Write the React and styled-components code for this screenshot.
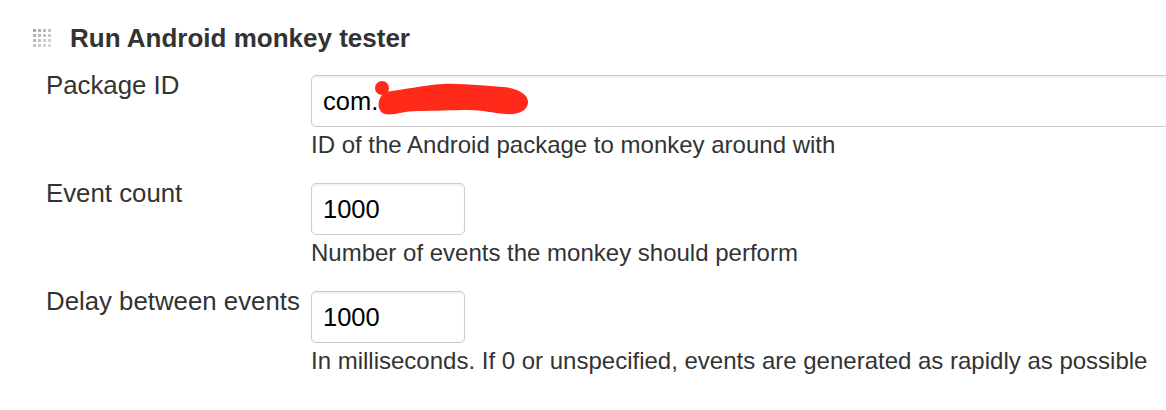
import React from "react";
import styled, { createGlobalStyle } from "styled-components";

const Global = createGlobalStyle`
  html, body { margin: 0; padding: 0; background: #fff; }
  body { overflow: hidden; font-family: "Liberation Sans", Arial, Helvetica, sans-serif; color: #333; }
`;

const Page = styled.div`
  width: 1166px;
  height: 410px;
  overflow: hidden;
  padding-top: 23px;
  box-sizing: border-box;
`;

const Header = styled.div`
  display: flex;
  align-items: center;
  padding-left: 32px;
  gap: 18px;
  height: 30px;
`;

const Title = styled.h2`
  margin: 0;
  font-size: 26px;
  line-height: 30px;
  font-weight: bold;
  color: #333;
`;

const Fields = styled.div`
  display: flex;
  flex-direction: column;
  gap: 22px;
  padding-left: 46px;
  margin-top: 19px;
`;

const FieldRow = styled.div`
  display: grid;
  grid-template-columns: 265px 1fr;
  align-items: start;
`;

const Label = styled.label`
  font-size: 25.8px;
  line-height: 26px;
  color: #333;
  white-space: nowrap;
`;

const Control = styled.div`
  position: relative;
  display: flex;
  flex-direction: column;
  padding-top: 3px;
`;

const Input = styled.input`
  box-sizing: border-box;
  width: ${(p) => (p.$wide ? "900px" : "154px")};
  height: 52px;
  padding: 0 11px;
  border: 1px solid #ccc;
  border-radius: 5px;
  box-shadow: inset 0 2px 2px rgba(0, 0, 0, 0.06);
  font-family: "Liberation Sans", Arial, Helvetica, sans-serif;
  font-size: 25.5px;
  color: #000;
  background: #fff;
  outline: none;
`;

const Help = styled.div`
  margin-top: 5px;
  font-size: 24px;
  line-height: 26px;
  color: #333;
  white-space: nowrap;
`;

const Redaction = styled.svg`
  position: absolute;
  left: 62px;
  top: 7px;
  pointer-events: none;
`;

function Grip() {
  const dots = [];
  for (let r = 0; r < 4; r++) {
    for (let c = 0; c < 4; c++) {
      const shade = 170 + (r + c) * 8;
      dots.push(
        <rect
          key={`${r}-${c}`}
          x={1 + c * 5}
          y={1 + r * 5}
          width="3"
          height="3"
          fill={`rgb(${shade},${shade},${shade})`}
        />
      );
    }
  }
  return (
    <svg width="20" height="20" viewBox="0 0 20 20">
      {dots}
    </svg>
  );
}

function Field({ label, value, help, wide, redact }) {
  return (
    <FieldRow>
      <Label>{label}</Label>
      <Control>
        <Input $wide={wide} defaultValue={value} readOnly />
        {redact && (
          <Redaction width="170" height="44" viewBox="0 0 170 44">
            <circle cx="9" cy="9" r="7" fill="#ff2a1a" />
            <path
              d="M12 13 C 30 11, 50 6, 70 5 C 90 4, 110 7, 130 8 C 145 9, 156 16, 155 24 C 154 32, 145 36, 132 35 C 120 34, 110 31, 95 31 C 80 31, 60 32, 45 32 C 30 32, 20 37, 12 35 C 4 33, 3 20, 12 13 Z"
              fill="#ff2a1a"
            />
          </Redaction>
        )}
        <Help>{help}</Help>
      </Control>
    </FieldRow>
  );
}

export default function App() {
  return (
    <>
      <Global />
      <Page>
        <Header>
          <Grip />
          <Title>Run Android monkey tester</Title>
        </Header>
        <Fields>
          <Field
            label="Package ID"
            value="com."
            wide
            redact
            help="ID of the Android package to monkey around with"
          />
          <Field
            label="Event count"
            value="1000"
            help="Number of events the monkey should perform"
          />
          <Field
            label="Delay between events"
            value="1000"
            help="In milliseconds. If 0 or unspecified, events are generated as rapidly as possible"
          />
        </Fields>
      </Page>
    </>
  );
}
